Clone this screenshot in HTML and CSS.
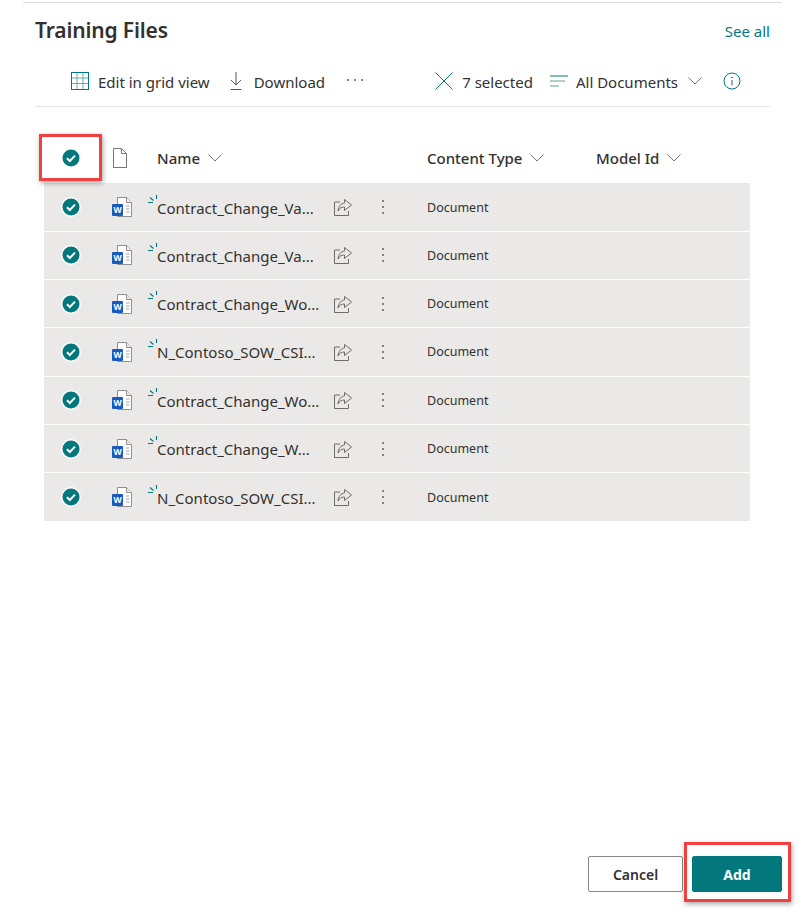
FILE: index.html
```html
<!DOCTYPE html>
<html>
  <head>
    <title>Training Files</title>
    <link rel="stylesheet" href="styles.css">
  </head>
  <body>
    <svg class="defs" width="0" height="0">
      <defs>
        <symbol id="check" viewBox="0 0 18 18">
          <circle cx="9" cy="9" r="8.5" fill="#03787c"/>
          <path d="M5 9.3l2.8 2.7L13 6.6" fill="none" stroke="#fff" stroke-width="2"/>
        </symbol>
        <symbol id="word" viewBox="0 0 22 22">
          <path d="M6.500 1.500h9l5 5v14h-14z" fill="#fff" stroke="#8f8f8f"/>
          <path d="M15.500 1.500v5h5" fill="#eee" stroke="#8f8f8f"/>
          <path d="M15 10h3.500M15 13h3.500M15 16h3.500" stroke="#a5a5a5"/>
          <rect x="1" y="8" width="11" height="12" rx="1" fill="#185abd"/>
          <text x="6.500" y="17" class="word-letter">W</text>
        </symbol>
        <symbol id="spark" viewBox="0 0 10 10">
          <path d="M8.500 0v4M2 2.500l3.500 3M0 7.500h5" fill="none" stroke="#03787c" stroke-width="1.100"/>
        </symbol>
        <symbol id="share" viewBox="0 0 20 20">
          <path d="M7 5H1.500v13.500h14V14" fill="none" stroke="#6e6c6a"/>
          <path d="M11.500 2.500l7 5.500-7 5.500v-3.500c-3 0-5 1-6.500 4 .5-5 3-7.500 6.500-8z" fill="none" stroke="#6e6c6a"/>
        </symbol>
        <symbol id="chevron" viewBox="0 0 14 8">
          <path d="M.5.500L7 7 13.500.500" fill="none" stroke="#777"/>
        </symbol>
      </defs>
    </svg>

    <div class="page">
      <div class="title-row">
        <h1>Training Files</h1>
        <a class="see-all">See all</a>
      </div>

      <div class="toolbar">
        <div class="tool-group">
          <span class="tool grid-tool">
            <svg width="18" height="18" viewBox="0 0 18 18"><rect x=".5" y=".5" width="17" height="17" fill="none" stroke="#03787c"/><path d="M.5 6h17M.5 11.500h17M6 .5v17M12 .5v17" stroke="#03787c" opacity=".6"/></svg>
            Edit in grid view
          </span>
          <span class="tool download-tool">
            <svg width="14" height="18" viewBox="0 0 14 18"><path d="M7 0v12.500M2 8l5 5 5-5" fill="none" stroke="#555"/><path d="M1.500 17.500h11" stroke="#03787c"/></svg>
            Download
          </span>
          <span class="more"><i></i><i></i><i></i></span>
        </div>
        <div class="tool-group right">
          <span class="tool clear-tool">
            <svg width="18" height="18" viewBox="0 0 18 18"><path d="M.5.500l17 17M17.500.500l-17 17" stroke="#03787c"/></svg>
            7 selected
          </span>
          <span class="tool view-tool">
            <svg width="18" height="12" viewBox="0 0 18 12"><path d="M0 1h18" stroke="#03787c"/><path d="M0 6h15M0 11h9" stroke="#6f9a9b"/></svg>
            All Documents
            <svg class="view-chevron" width="14" height="8"><use href="#chevron"/></svg>
          </span>
          <svg class="info" width="18" height="18" viewBox="0 0 18 18"><circle cx="9" cy="9" r="8" fill="none" stroke="#03787c"/><path d="M9 8v5.500" stroke="#555"/><circle cx="9" cy="5.500" r=".8" fill="#555"/></svg>
        </div>
      </div>

      <div class="list-head">
        <div class="col-check"><svg width="18" height="18"><use href="#check"/></svg></div>
        <div class="col-icon">
          <svg width="18" height="20" viewBox="0 0 18 20"><path d="M2.500.5h8l5 5v14h-13z" fill="#fff" stroke="#777"/><path d="M10.500.5v5h5" fill="none" stroke="#777"/></svg>
        </div>
        <div class="head-name">Name <svg width="14" height="8"><use href="#chevron"/></svg></div>
        <div class="head-type">Content Type <svg width="14" height="8"><use href="#chevron"/></svg></div>
        <div class="head-model">Model Id <svg width="14" height="8"><use href="#chevron"/></svg></div>
      </div>

      <div class="rows">
        <div class="row">
          <div class="col-check"><svg class="row-check" width="18" height="18"><use href="#check"/></svg></div>
          <div class="col-icon"><svg width="22" height="22"><use href="#word"/></svg></div>
          <div class="col-name"><svg class="spark" width="10" height="10"><use href="#spark"/></svg>Contract_Change_Va...</div>
          <div class="col-share"><svg width="20" height="20"><use href="#share"/></svg></div>
          <div class="col-dots"><i></i><i></i><i></i></div>
          <div class="col-type">Document</div>
        </div>
        <div class="row">
          <div class="col-check"><svg class="row-check" width="18" height="18"><use href="#check"/></svg></div>
          <div class="col-icon"><svg width="22" height="22"><use href="#word"/></svg></div>
          <div class="col-name"><svg class="spark" width="10" height="10"><use href="#spark"/></svg>Contract_Change_Va...</div>
          <div class="col-share"><svg width="20" height="20"><use href="#share"/></svg></div>
          <div class="col-dots"><i></i><i></i><i></i></div>
          <div class="col-type">Document</div>
        </div>
        <div class="row">
          <div class="col-check"><svg class="row-check" width="18" height="18"><use href="#check"/></svg></div>
          <div class="col-icon"><svg width="22" height="22"><use href="#word"/></svg></div>
          <div class="col-name"><svg class="spark" width="10" height="10"><use href="#spark"/></svg>Contract_Change_Wo...</div>
          <div class="col-share"><svg width="20" height="20"><use href="#share"/></svg></div>
          <div class="col-dots"><i></i><i></i><i></i></div>
          <div class="col-type">Document</div>
        </div>
        <div class="row">
          <div class="col-check"><svg class="row-check" width="18" height="18"><use href="#check"/></svg></div>
          <div class="col-icon"><svg width="22" height="22"><use href="#word"/></svg></div>
          <div class="col-name"><svg class="spark" width="10" height="10"><use href="#spark"/></svg>N_Contoso_SOW_CSI...</div>
          <div class="col-share"><svg width="20" height="20"><use href="#share"/></svg></div>
          <div class="col-dots"><i></i><i></i><i></i></div>
          <div class="col-type">Document</div>
        </div>
        <div class="row">
          <div class="col-check"><svg class="row-check" width="18" height="18"><use href="#check"/></svg></div>
          <div class="col-icon"><svg width="22" height="22"><use href="#word"/></svg></div>
          <div class="col-name"><svg class="spark" width="10" height="10"><use href="#spark"/></svg>Contract_Change_Wo...</div>
          <div class="col-share"><svg width="20" height="20"><use href="#share"/></svg></div>
          <div class="col-dots"><i></i><i></i><i></i></div>
          <div class="col-type">Document</div>
        </div>
        <div class="row">
          <div class="col-check"><svg class="row-check" width="18" height="18"><use href="#check"/></svg></div>
          <div class="col-icon"><svg width="22" height="22"><use href="#word"/></svg></div>
          <div class="col-name"><svg class="spark" width="10" height="10"><use href="#spark"/></svg>Contract_Change_W...</div>
          <div class="col-share"><svg width="20" height="20"><use href="#share"/></svg></div>
          <div class="col-dots"><i></i><i></i><i></i></div>
          <div class="col-type">Document</div>
        </div>
        <div class="row">
          <div class="col-check"><svg class="row-check" width="18" height="18"><use href="#check"/></svg></div>
          <div class="col-icon"><svg width="22" height="22"><use href="#word"/></svg></div>
          <div class="col-name"><svg class="spark" width="10" height="10"><use href="#spark"/></svg>N_Contoso_SOW_CSI...</div>
          <div class="col-share"><svg width="20" height="20"><use href="#share"/></svg></div>
          <div class="col-dots"><i></i><i></i><i></i></div>
          <div class="col-type">Document</div>
        </div>
      </div>

      <div class="footer">
        <button class="btn cancel">Cancel</button>
        <button class="btn add">Add</button>
      </div>

      <!-- red callouts drawn over the screenshot -->
      <div class="callout callout-check"></div>
      <div class="callout callout-add"></div>
    </div>
  </body>
</html>
```

FILE: styles.css
```css
body {
  margin: 0;
  font-family: "Noto Sans", "Open Sans", sans-serif;
  color: #323130;
  background: #ffffff;
}

.defs {
  display: block;
  height: 0;
}

.page {
  position: relative;
  width: 806px;
  height: 912px;
  overflow: hidden;
  display: flex;
  flex-direction: column;
}

.page::before {
  content: "";
  display: block;
  height: 1px;
  margin: 2px 24px 0 23px;
  background: #e1dfdd;
}

.title-row {
  display: flex;
  justify-content: space-between;
  align-items: center;
  box-sizing: border-box;
  height: 52px;
  padding: 2px 36px 0 35px;
}

h1 {
  margin: 0;
  font-size: 21px;
  font-weight: 600;
  letter-spacing: -0.15px;
}

.see-all {
  font-size: 15px;
  color: #03787c;
  padding-top: 2px;
}

.toolbar {
  display: flex;
  justify-content: space-between;
  align-items: center;
  box-sizing: content-box;
  height: 49px;
  margin: 0 36px 0 35px;
  padding: 2px 29px 0 36px;
  border-bottom: 1px solid #e8e6e4;
  font-size: 15px;
}

.tool-group {
  display: flex;
  align-items: center;
}

.tool {
  display: flex;
  align-items: center;
  gap: 9px;
}

.tool svg,
.info {
  margin-top: -2px;
}

.download-tool {
  margin-left: 19px;
  gap: 11px;
}

.more {
  display: flex;
  gap: 5px;
  margin-left: 22px;
  margin-top: -4px;
}

.more i {
  width: 2px;
  height: 2px;
  background: #605e5c;
  border-radius: 50%;
}

.view-tool {
  margin-left: 17px;
  gap: 8px;
}

.view-chevron {
  margin-left: 2px;
}

.info {
  margin-left: 21px;
}

.list-head {
  display: flex;
  align-items: center;
  box-sizing: border-box;
  height: 76px;
  padding-top: 26px;
  margin-left: 44px;
  margin-right: 45px;
  font-size: 15px;
  font-weight: 500;
}

.list-head .col-icon {
  padding-left: 13px;
  padding-right: 0;
}

.list-head svg {
  margin-top: -1px;
}

.head-name {
  width: 270px;
}

.head-type {
  width: 169px;
}

.head-name svg,
.head-type svg,
.head-model svg {
  margin-left: 4px;
  vertical-align: 2px;
}

.col-check {
  flex: none;
  width: 54px;
  display: flex;
  justify-content: center;
}

.col-icon {
  flex: none;
  width: 59px;
  padding-left: 13px;
  box-sizing: border-box;
  display: flex;
}

.rows {
  margin: 0.4px 56px 0 44px;
  background: #ebe9e7;
}

.row {
  display: flex;
  align-items: center;
  height: 48.3px;
  box-sizing: border-box;
  border-bottom: 1px solid #ffffff;
  font-size: 15px;
}

.row:last-child {
  border-bottom: 0;
}

.row-check {
  border-radius: 50%;
  box-shadow: 0 0 0 1px #ffffff;
}

.col-name {
  position: relative;
  flex: none;
  width: 173px;
  white-space: nowrap;
  padding-top: 1px;
}

.spark {
  position: absolute;
  left: -9px;
  top: -2px;
}

.col-share {
  flex: none;
  width: 26px;
  display: flex;
  justify-content: center;
  margin-right: 14px;
}

.col-dots {
  flex: none;
  width: 26px;
  display: flex;
  flex-direction: column;
  align-items: center;
  gap: 4px;
  margin-right: 31px;
}

.col-dots i {
  width: 2px;
  height: 2px;
  background: #605e5c;
  border-radius: 50%;
}

.col-type {
  font-size: 12.5px;
}

.footer {
  display: flex;
  justify-content: flex-end;
  gap: 9px;
  margin-top: auto;
  padding: 0 24px 20px 0;
}

.btn {
  height: 36px;
  font-family: inherit;
  font-size: 14px;
  font-weight: 600;
  border-radius: 2px;
}

.cancel {
  width: 95px;
  background: #ffffff;
  border: 1px solid #8a8886;
  color: #323130;
}

.add {
  width: 90px;
  background: #03787c;
  border: 1px solid #03787c;
  color: #ffffff;
  font-weight: 700;
}

.callout {
  position: absolute;
  box-sizing: border-box;
  border: 3px solid #f04040;
  box-shadow: 1px 2px 5px rgba(0, 0, 0, 0.35);
}

.callout-check {
  left: 39px;
  top: 134px;
  width: 63px;
  height: 47px;
}

.callout-add {
  left: 684px;
  top: 842px;
  width: 107px;
  height: 60px;
}

.word-letter {
  fill: #ffffff;
  font-size: 8.5px;
  font-weight: 700;
  text-anchor: middle;
}
```
